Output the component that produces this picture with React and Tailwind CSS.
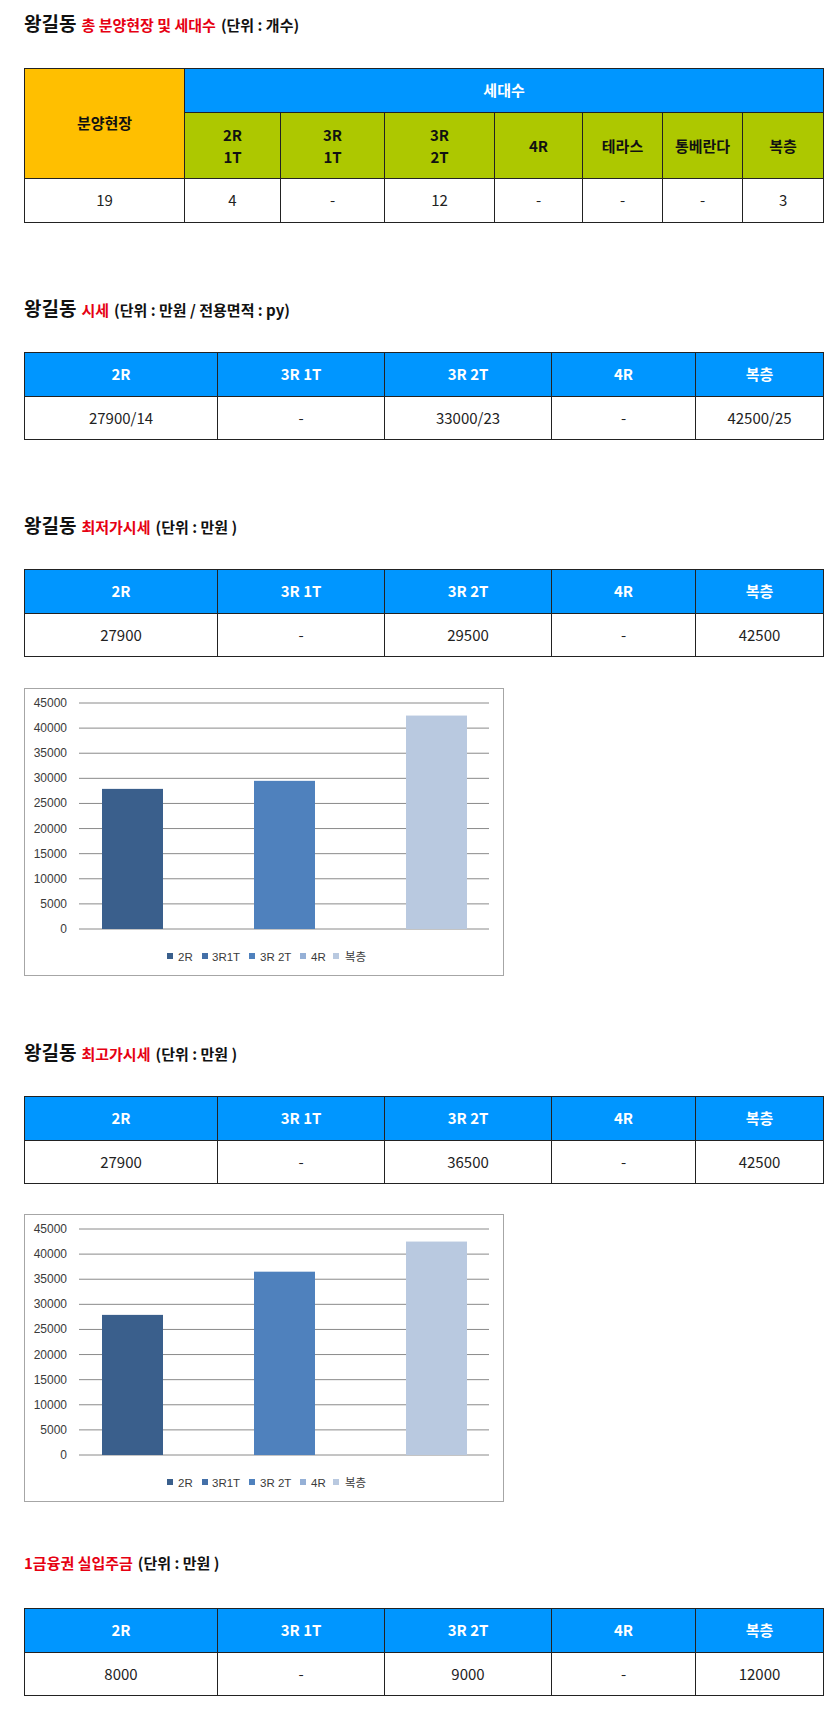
import React from 'react';

const LABELS = ['2R', '3R 1T', '3R 2T', '4R', '복층'];
const COLS = ['w-[193px]', 'w-[167px]', 'w-[167px]', 'w-[144px]', 'w-[128px]'];

const Title = ({ lead, red, unit, className = '' }) => (
  <div className={`flex items-baseline gap-[5px] h-6 leading-6 font-bold text-[#111] ${className}`}>
    {lead && <span className="text-[19px]">{lead}</span>}
    <span className="text-[15px] text-[#e60012]">{red}</span>
    <span className="text-[15px]">{unit}</span>
  </div>
);

const PriceTable = ({ values, className = '' }) => (
  <table className={`table-fixed border-collapse w-[799px] text-center text-[15px] ${className}`}>
    <colgroup>
      {COLS.map((c, i) => <col key={i} className={c} />)}
    </colgroup>
    <tbody>
      <tr className="h-[44px] bg-[#0096ff]">
        {LABELS.map((l) => (
          <th key={l} className="border border-[#222] font-bold text-white">{l}</th>
        ))}
      </tr>
      <tr className="h-[43px] bg-white">
        {values.map((v, i) => (
          <td key={i} className="border border-[#222] text-[#222]">{v}</td>
        ))}
      </tr>
    </tbody>
  </table>
);

// bar chart drawn like the excel export in the source post
const Chart = ({ values, className = '' }) => {
  const y0 = 240;
  const step = 226 / 9;
  const yOf = (v) => y0 - (v / 5000) * step;
  const ticks = [45000, 40000, 35000, 30000, 25000, 20000, 15000, 10000, 5000, 0];
  const bars = [
    { x: 77, v: values[0], c: '#3a5f8c' },
    { x: 229, v: values[1], c: '#4f81bd' },
    { x: 381, v: values[2], c: '#b9c9e0' },
  ];
  const legend = [
    { sq: 142, tx: 153, c: '#3a5f8c', t: '2R' },
    { sq: 177, tx: 187, c: '#4470a8', t: '3R1T' },
    { sq: 224, tx: 235, c: '#4f81bd', t: '3R 2T' },
    { sq: 275, tx: 286, c: '#95b0d6', t: '4R' },
    { sq: 308, tx: 320, c: '#b9c9e0', t: '복층' },
  ];
  return (
    <div className={`w-[480px] h-[288px] border border-[#a6a6a6] bg-white ${className}`}>
      <svg width="478" height="286" viewBox="0 0 478 286" className="block font-['Liberation_Sans','Noto_Sans_CJK_KR',sans-serif]">
        {ticks.map((t) => (
          <g key={t}>
            <line x1="54" x2="464" y1={yOf(t)} y2={yOf(t)} stroke="#8a8a8a" strokeWidth="1" />
            <text x="42" y={yOf(t) + 4} textAnchor="end" fontSize="12" fill="#3a3a3a">{t}</text>
          </g>
        ))}
        {bars.map((b, i) => (
          <rect key={i} x={b.x} y={yOf(b.v)} width="61" height={y0 - yOf(b.v)} fill={b.c} />
        ))}
        {legend.map((l) => (
          <g key={l.t}>
            <rect x={l.sq} y="264" width="6" height="6" fill={l.c} />
            <text x={l.tx} y="271.5" fontSize="11.5" fill="#3a3a3a">{l.t}</text>
          </g>
        ))}
      </svg>
    </div>
  );
};

const th1 = 'border border-[#222] font-bold text-[#111]';

export default function App() {
  return (
    <div className="min-h-screen bg-white pl-6 pt-[11px] pb-[28px] font-['Noto_Sans_CJK_KR',sans-serif]">
      <Title lead="왕길동" red="총 분양현장 및 세대수" unit="(단위 : 개수)" />

      <table className="table-fixed border-collapse w-[799px] text-center text-[15px] mt-[33px]">
        <colgroup>
          <col className="w-[160px]" />
          <col className="w-[96px]" />
          <col className="w-[104px]" />
          <col className="w-[110px]" />
          <col className="w-[88px]" />
          <col className="w-[80px]" />
          <col className="w-[80px]" />
          <col className="w-[81px]" />
        </colgroup>
        <tbody>
          <tr className="h-[44px]">
            <th rowSpan={2} className={`${th1} bg-[#ffbf00]`}>분양현장</th>
            <th colSpan={7} className="border border-[#222] bg-[#0096ff] font-bold text-white">세대수</th>
          </tr>
          <tr className="h-[66px] bg-[#adc800] leading-[22px]">
            <th className={th1}>2R<br />1T</th>
            <th className={th1}>3R<br />1T</th>
            <th className={th1}>3R<br />2T</th>
            <th className={th1}>4R</th>
            <th className={th1}>테라스</th>
            <th className={th1}>통베란다</th>
            <th className={th1}>복층</th>
          </tr>
          <tr className="h-[44px] text-[#222]">
            {['19', '4', '-', '12', '-', '-', '-', '3'].map((v, i) => (
              <td key={i} className="border border-[#222]">{v}</td>
            ))}
          </tr>
        </tbody>
      </table>

      <Title className="mt-[73px]" lead="왕길동" red="시세" unit="(단위 : 만원 / 전용면적 : py)" />
      <PriceTable className="mt-8" values={['27900/14', '-', '33000/23', '-', '42500/25']} />

      <Title className="mt-[73px]" lead="왕길동" red="최저가시세" unit="(단위 : 만원 )" />
      <PriceTable className="mt-8" values={['27900', '-', '29500', '-', '42500']} />
      <Chart className="mt-[31px]" values={[27900, 29500, 42500]} />

      <Title className="mt-[64px]" lead="왕길동" red="최고가시세" unit="(단위 : 만원 )" />
      <PriceTable className="mt-[32px]" values={['27900', '-', '36500', '-', '42500']} />
      <Chart className="mt-[30px]" values={[27900, 36500, 42500]} />

      <Title className="mt-[49px]" red="1금융권 실입주금" unit="(단위 : 만원 )" />
      <PriceTable className="mt-[33px]" values={['8000', '-', '9000', '-', '12000']} />
    </div>
  );
}
